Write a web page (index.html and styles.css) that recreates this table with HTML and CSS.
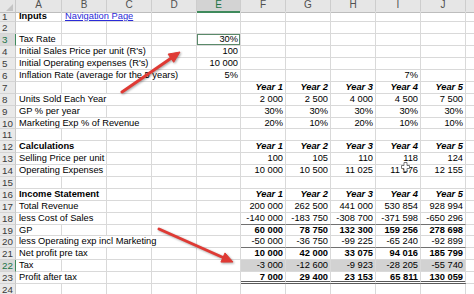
FILE: index.html
```html
<!DOCTYPE html>
<html>
<head>
<meta charset="utf-8">
<link rel="stylesheet" href="styles.css">
</head>
<body>
<div class="sheet">
  <div class="row hdr">
    <div class="corner"><span class="tri"></span></div>
    <div class="ch">A</div><div class="ch">B</div><div class="ch">C</div><div class="ch">D</div>
    <div class="ch ch-sel">E</div><div class="ch">F</div><div class="ch">G</div><div class="ch">H</div>
    <div class="ch">I</div><div class="ch">J</div><div class="ch"></div>
  </div>

  <div class="row">
    <div class="rh">1</div><div class="c b">Inputs</div><div class="c s2"><span class="link">Navigation Page</span></div>
    <div class="c"></div><div class="c"></div><div class="c"></div><div class="c"></div><div class="c"></div><div class="c"></div><div class="c"></div><div class="c"></div>
  </div>
  <div class="row">
    <div class="rh">2</div><div class="c"></div><div class="c"></div><div class="c"></div><div class="c"></div><div class="c"></div><div class="c"></div><div class="c"></div><div class="c"></div><div class="c"></div><div class="c"></div><div class="c"></div>
  </div>
  <div class="row">
    <div class="rh rh-sel">3</div><div class="c">Tax Rate</div><div class="c"></div><div class="c"></div><div class="c"></div>
    <div class="c n active">30%</div><div class="c"></div><div class="c"></div><div class="c"></div><div class="c"></div><div class="c"></div><div class="c"></div>
  </div>
  <div class="row">
    <div class="rh">4</div><div class="c s3">Initial Sales Price per unit (R's)</div><div class="c"></div>
    <div class="c n">100</div><div class="c"></div><div class="c"></div><div class="c"></div><div class="c"></div><div class="c"></div><div class="c"></div>
  </div>
  <div class="row">
    <div class="rh">5</div><div class="c s3">Initial Operating expenses (R's)</div><div class="c"></div>
    <div class="c n">10 000</div><div class="c"></div><div class="c"></div><div class="c"></div><div class="c"></div><div class="c"></div><div class="c"></div>
  </div>
  <div class="row">
    <div class="rh">6</div><div class="c s4">Inflation Rate (average for the 5 years)</div>
    <div class="c n">5%</div><div class="c"></div><div class="c"></div><div class="c"></div><div class="c n">7%</div><div class="c"></div><div class="c"></div>
  </div>
  <div class="row">
    <div class="rh">7</div><div class="c"></div><div class="c"></div><div class="c"></div><div class="c"></div><div class="c"></div>
    <div class="c n bi">Year 1</div><div class="c n bi">Year 2</div><div class="c n bi">Year 3</div><div class="c n bi">Year 4</div><div class="c n bi">Year 5</div><div class="c"></div>
  </div>
  <div class="row">
    <div class="rh">8</div><div class="c s3">Units Sold Each Year</div><div class="c"></div><div class="c"></div>
    <div class="c n">2 000</div><div class="c n">2 500</div><div class="c n">4 000</div><div class="c n">4 500</div><div class="c n">7 500</div><div class="c"></div>
  </div>
  <div class="row">
    <div class="rh">9</div><div class="c s2">GP % per year</div><div class="c"></div><div class="c"></div><div class="c"></div>
    <div class="c n">30%</div><div class="c n">30%</div><div class="c n">30%</div><div class="c n">30%</div><div class="c n">30%</div><div class="c"></div>
  </div>
  <div class="row">
    <div class="rh">10</div><div class="c s3">Marketing Exp % of Revenue</div><div class="c"></div><div class="c"></div>
    <div class="c n">20%</div><div class="c n">10%</div><div class="c n">20%</div><div class="c n">10%</div><div class="c n">10%</div><div class="c"></div>
  </div>
  <div class="row">
    <div class="rh">11</div><div class="c"></div><div class="c"></div><div class="c"></div><div class="c"></div><div class="c"></div><div class="c"></div><div class="c"></div><div class="c"></div><div class="c"></div><div class="c"></div><div class="c"></div>
  </div>
  <div class="row">
    <div class="rh">12</div><div class="c s2 b">Calculations</div><div class="c"></div><div class="c"></div><div class="c"></div>
    <div class="c n bi">Year 1</div><div class="c n bi">Year 2</div><div class="c n bi">Year 3</div><div class="c n bi">Year 4</div><div class="c n bi">Year 5</div><div class="c"></div>
  </div>
  <div class="row">
    <div class="rh">13</div><div class="c s2">Selling Price per unit</div><div class="c"></div><div class="c"></div><div class="c"></div>
    <div class="c n">100</div><div class="c n">105</div><div class="c n">110</div><div class="c n">118</div><div class="c n">124</div><div class="c"></div>
  </div>
  <div class="row">
    <div class="rh">14</div><div class="c s2">Operating Expenses</div><div class="c"></div><div class="c"></div><div class="c"></div>
    <div class="c n">10 000</div><div class="c n">10 500</div><div class="c n">11 025</div><div class="c n">11 576</div><div class="c n">12 155</div><div class="c"></div>
  </div>
  <div class="row">
    <div class="rh">15</div><div class="c"></div><div class="c"></div><div class="c"></div><div class="c"></div><div class="c"></div><div class="c"></div><div class="c"></div><div class="c"></div><div class="c"></div><div class="c"></div><div class="c"></div>
  </div>
  <div class="row">
    <div class="rh">16</div><div class="c s2 b">Income Statement</div><div class="c"></div><div class="c"></div><div class="c"></div>
    <div class="c n bi">Year 1</div><div class="c n bi">Year 2</div><div class="c n bi">Year 3</div><div class="c n bi">Year 4</div><div class="c n bi">Year 5</div><div class="c"></div>
  </div>
  <div class="row">
    <div class="rh">17</div><div class="c s2">Total Revenue</div><div class="c"></div><div class="c"></div><div class="c"></div>
    <div class="c n">200 000</div><div class="c n">262 500</div><div class="c n">441 000</div><div class="c n">530 854</div><div class="c n">928 994</div><div class="c"></div>
  </div>
  <div class="row">
    <div class="rh">18</div><div class="c s2">less Cost of Sales</div><div class="c"></div><div class="c"></div><div class="c"></div>
    <div class="c n bb">-140 000</div><div class="c n bb">-183 750</div><div class="c n bb">-308 700</div><div class="c n bb">-371 598</div><div class="c n bb">-650 296</div><div class="c"></div>
  </div>
  <div class="row">
    <div class="rh">19</div><div class="c">GP</div><div class="c"></div><div class="c"></div><div class="c"></div><div class="c"></div>
    <div class="c n b">60 000</div><div class="c n b">78 750</div><div class="c n b">132 300</div><div class="c n b">159 256</div><div class="c n b">278 698</div><div class="c"></div>
  </div>
  <div class="row">
    <div class="rh">20</div><div class="c s4">less Operating exp incl Marketing</div><div class="c"></div>
    <div class="c n bb">-50 000</div><div class="c n bb">-36 750</div><div class="c n bb">-99 225</div><div class="c n bb">-65 240</div><div class="c n bb">-92 899</div><div class="c"></div>
  </div>
  <div class="row">
    <div class="rh">21</div><div class="c s2">Net profit pre tax</div><div class="c"></div><div class="c"></div><div class="c"></div>
    <div class="c n b">10 000</div><div class="c n b">42 000</div><div class="c n b">33 075</div><div class="c n b">94 016</div><div class="c n b">185 799</div><div class="c"></div>
  </div>
  <div class="row">
    <div class="rh rh-sel">22</div><div class="c">Tax</div><div class="c"></div><div class="c"></div><div class="c"></div><div class="c"></div>
    <div class="c n fill">-3 000</div><div class="c n fill">-12 600</div><div class="c n fill">-9 923</div><div class="c n fill">-28 205</div><div class="c n fill">-55 740</div><div class="c"></div>
  </div>
  <div class="row">
    <div class="rh">23</div><div class="c s2">Profit after tax</div><div class="c"></div><div class="c"></div><div class="c"></div>
    <div class="c n b dbl">7 000</div><div class="c n b dbl">29 400</div><div class="c n b dbl">23 153</div><div class="c n b dbl">65 811</div><div class="c n b dbl">130 059</div><div class="c"></div>
  </div>
  <div class="row">
    <div class="rh">24</div><div class="c"></div><div class="c"></div><div class="c"></div><div class="c"></div><div class="c"></div><div class="c"></div><div class="c"></div><div class="c"></div><div class="c"></div><div class="c"></div><div class="c"></div>
  </div>

  <svg class="arrows" width="474" height="294" viewBox="0 0 474 294">
    <g fill="#df3a34" stroke="#df3a34">
      <line x1="122" y1="92" x2="171" y2="58.2" stroke-width="3" stroke-linecap="round"/>
      <polygon points="180,52 173.7,62.3 168.1,54.1" stroke-width="1" stroke-linejoin="round"/>
      <line x1="159" y1="229" x2="223" y2="257.5" stroke-width="3" stroke-linecap="round"/>
      <polygon points="233,262 220.9,262.1 225,252.9" stroke-width="1" stroke-linejoin="round"/>
    </g>
  </svg>
  <svg class="cursor" width="9" height="10" viewBox="0 0 9 10">
    <path d="M3 0.5h3v3h2.5v3H6v3H3v-3H0.5v-3H3z" fill="#fff" stroke="#555" stroke-width="0.8"/>
  </svg>
</div>
</body>
</html>
```

FILE: styles.css
```css
html, body {
  margin: 0;
  padding: 0;
  background: #fff;
  overflow: hidden;
}
body {
  width: 474px;
  height: 294px;
  font-family: "Liberation Sans", Arial, sans-serif;
}
.sheet {
  position: relative;
  width: 474px;
  height: 294px;
  overflow: hidden;
  --cols: 16px 46px 45px 45px 45px 44px 45px 45px 45px 45px 45px 40px;
}
.row {
  display: grid;
  grid-template-columns: var(--cols);
  height: 11.9px;
  font-size: 9.3px;
  line-height: 11.9px;
  color: #000;
}
.row.hdr {
  height: 10.5px;
  line-height: 10.5px;
}
.corner {
  position: relative;
  background: #e6e6e6;
  border-right: 1px solid #c8c8c8;
  border-bottom: 1px solid #bdbdbd;
  box-sizing: border-box;
}
.tri {
  position: absolute;
  right: 2px;
  bottom: 1px;
  width: 0;
  height: 0;
  border-left: 7px solid transparent;
  border-bottom: 7px solid #c4c4c4;
}
.ch {
  background: #e6e6e6;
  color: #505050;
  font-size: 10px;
  text-align: center;
  border-right: 1px solid #cdcdcd;
  border-bottom: 1px solid #bdbdbd;
  box-sizing: border-box;
}
.ch-sel {
  background: #d3d3d3;
  color: #217346;
  border-bottom: 2px solid #3f8a5c;
}
.rh {
  background: #e9e9e9;
  color: #3a3a3a;
  font-size: 9.8px;
  padding-left: 2px;
  border-right: 1px solid #c8c8c8;
  border-bottom: 1px solid #d4d4d4;
  box-sizing: border-box;
  overflow: hidden;
  white-space: nowrap;
}
.rh-sel {
  background: #d9d9d9;
  color: #217346;
  border-right: 1px solid #3f8a5c;
}
.c {
  border-right: 1px solid #d9d9d9;
  border-bottom: 1px solid #d9d9d9;
  box-sizing: border-box;
  padding: 0 2px 0 3px;
  white-space: nowrap;
  overflow: hidden;
}
.s2 { grid-column: span 2; }
.s3 { grid-column: span 3; }
.s4 { grid-column: span 4; }
.n { text-align: right; }
.b { font-weight: bold; }
.bi { font-weight: bold; font-style: italic; }
.link {
  color: #2a2ad8;
  text-decoration: underline;
}
.active {
  box-shadow: inset 0 0 0 1px #5b8a6a;
}
.bb { border-bottom-color: #707070; }
.dbl { border-bottom: 3px double #5a5a5a; }
.fill { background: #d2d2d2; }
.arrows {
  position: absolute;
  left: 0;
  top: 0;
  pointer-events: none;
  filter: drop-shadow(1px 1.5px 1px rgba(0, 0, 0, 0.35));
}
.cursor {
  position: absolute;
  left: 401px;
  top: 162px;
}
```
